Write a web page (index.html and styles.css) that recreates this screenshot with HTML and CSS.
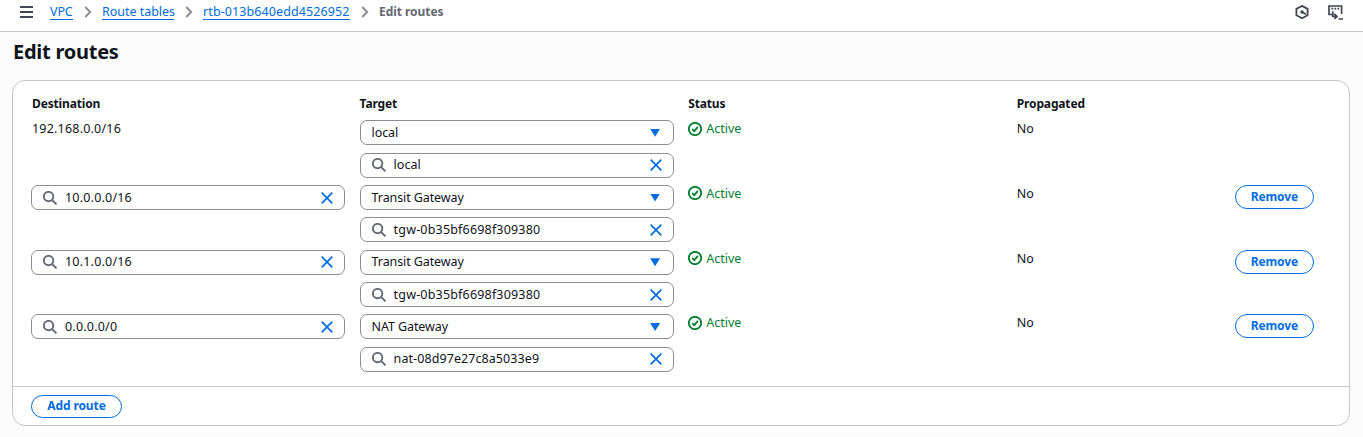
FILE: index.html
```html
<!DOCTYPE html>
<html lang="en">
<head>
<meta charset="utf-8">
<title>Edit routes</title>
<link rel="stylesheet" href="styles.css">
</head>
<body>
<svg class="defs" width="0" height="0">
  <symbol id="search" viewBox="0 0 14 14"><circle cx="5.6" cy="5.6" r="4.7"/><path d="M8.9 8.9l4.5 4.4"/></symbol>
  <symbol id="close" viewBox="0 0 12 12"><path d="M.7.7l10.6 10.6M11.3.7L.7 11.3"/></symbol>
  <symbol id="check" viewBox="0 0 14 14"><circle cx="7" cy="7" r="6.2"/><path d="M4.2 7.1l2.1 2 3.6-4.2"/></symbol>
  <symbol id="chevron" viewBox="0 0 8 12"><path d="M1.2 1l5 5-5 5"/></symbol>
</svg>
<header class="topbar">
  <svg class="menu" viewBox="0 0 13 12"><path d="M0 1h13M0 6h13M0 11h13"/></svg>
  <nav class="crumbs">
    <a class="crumb vpc">VPC</a><svg class="sep"><use href="#chevron"/></svg>
    <a class="crumb tables">Route tables</a><svg class="sep"><use href="#chevron"/></svg>
    <a class="crumb rtb">rtb-013b640edd4526952</a><svg class="sep"><use href="#chevron"/></svg>
    <span class="current">Edit routes</span>
  </nav>
  <div class="tools">
    <svg class="hex" viewBox="0 0 14 14"><path d="M7 .9l5.6 3v6.4L7 13.3l-5.6-3V3.9z"/><path d="M7 7l4 2.2"/><circle class="dot" cx="7" cy="7" r="1.7"/></svg>
    <svg class="shell" viewBox="0 0 15 15"><path d="M4 9.5H1V1h12.6v8"/><path d="M3.4 3.6h1.8M6.4 3.6h1.8M9.4 3.6h1.8"/><path d="M4.8 6.2v5.2H8.6M6.4 8.8L9 11.4 6.4 14M10.5 14H15"/></svg>
  </div>
</header>
<main class="page">
  <h1 class="title">Edit routes</h1>
  <section class="card">
    <div class="routes">
      <div class="row head"><span>Destination</span><span>Target</span><span>Status</span><span>Propagated</span></div>
      <div class="row">
        <div class="value ip">192.168.0.0/16</div>
        <div class="stack">
          <div class="field select"><span>local</span><i class="caret"></i></div>
          <div class="field"><svg class="search"><use href="#search"/></svg><span>local</span><svg class="close"><use href="#close"/></svg></div>
        </div>
        <div class="status"><svg class="check"><use href="#check"/></svg>Active</div>
        <div class="value">No</div>
      </div>
      <div class="row">
        <div class="field"><svg class="search"><use href="#search"/></svg><span class="ip">10.0.0.0/16</span><svg class="close"><use href="#close"/></svg></div>
        <div class="stack">
          <div class="field select"><span>Transit Gateway</span><i class="caret"></i></div>
          <div class="field"><svg class="search"><use href="#search"/></svg><span class="id">tgw-0b35bf6698f309380</span><svg class="close"><use href="#close"/></svg></div>
        </div>
        <div class="status"><svg class="check"><use href="#check"/></svg>Active</div>
        <div class="value">No</div>
        <button class="button remove">Remove</button>
      </div>
      <div class="row">
        <div class="field"><svg class="search"><use href="#search"/></svg><span class="ip">10.1.0.0/16</span><svg class="close"><use href="#close"/></svg></div>
        <div class="stack">
          <div class="field select"><span>Transit Gateway</span><i class="caret"></i></div>
          <div class="field"><svg class="search"><use href="#search"/></svg><span class="id">tgw-0b35bf6698f309380</span><svg class="close"><use href="#close"/></svg></div>
        </div>
        <div class="status"><svg class="check"><use href="#check"/></svg>Active</div>
        <div class="value">No</div>
        <button class="button remove">Remove</button>
      </div>
      <div class="row">
        <div class="field"><svg class="search"><use href="#search"/></svg><span class="ip">0.0.0.0/0</span><svg class="close"><use href="#close"/></svg></div>
        <div class="stack">
          <div class="field select"><span>NAT Gateway</span><i class="caret"></i></div>
          <div class="field"><svg class="search"><use href="#search"/></svg><span class="nat">nat-08d97e27c8a5033e9</span><svg class="close"><use href="#close"/></svg></div>
        </div>
        <div class="status"><svg class="check"><use href="#check"/></svg>Active</div>
        <div class="value">No</div>
        <button class="button remove">Remove</button>
      </div>
    </div>
    <footer class="footer"><button class="button add">Add route</button></footer>
  </section>
</main>
</body>
</html>
```
FILE: styles.css
```css
* { box-sizing: border-box; }
body { margin: 0; height: 437px; overflow: hidden; background: #fcfcfd; color: #0f141a; font: 12.5px/16px "Noto Sans", "Open Sans", sans-serif; }
svg { flex: none; fill: none; overflow: visible; }
.defs { position: absolute; }
.topbar { height: 32px; padding: 0 20px 7px 20px; display: flex; align-items: center; background: #fff; border-bottom: 1px solid #c6c6cd; }
.menu { width: 13px; height: 12px; stroke: #424650; stroke-width: 1.8; }
.crumbs { margin-left: 17px; display: flex; align-items: center; }
.crumb { height: 16px; color: #006ce0; border-bottom: 1px solid #006ce0; line-height: 16px; white-space: nowrap; }
.vpc { width: 23px; letter-spacing: -.1px; }
.tables { width: 72px; letter-spacing: -.03px; }
.rtb { width: 147px; letter-spacing: .1px; }
.sep { width: 8px; height: 12px; margin: 0 10px 0 11px; stroke: #8c8c94; stroke-width: 1.9; }
.current { height: 17px; font-weight: 700; color: #656871; font-size: 12px; line-height: 15px; letter-spacing: -.05px; }
.tools { margin-left: auto; display: flex; gap: 19px; }
.hex { width: 14px; height: 14px; stroke: #424650; stroke-width: 1.8; }
.dot { fill: #424650; stroke: none; }
.shell { width: 15px; height: 15px; stroke: #424650; stroke-width: 1.7; }
.page { padding: 0 13px 0 12px; }
.title { margin: 0; padding: 6px 0 0 1px; height: 48px; font-size: 20px; line-height: 28px; font-weight: 700; letter-spacing: -.25px; }
.card { height: 346px; border: 1px solid #c6c6cd; border-radius: 13px; background: #fff; display: flex; flex-direction: column; }
.routes { height: 305px; padding: 14.25px 18px 0; }
.row { height: 64.7px; display: grid; grid-template-columns: 314px 314px 314px 203.5px 80px; column-gap: 14.6px; align-items: start; }
.head { height: 25px; font-size: 12px; font-weight: 700; line-height: 17px; letter-spacing: -.15px; }
.row > :first-child:not(.field) { padding-left: 1px; }
.stack { display: grid; row-gap: 7.2px; }
.field { height: 25.15px; border: 1px solid #8c8c94; border-radius: 7px; padding: 0 11.5px 0 11px; display: flex; align-items: center; }
.stack .field { padding-right: 11px; }
.field span { flex: 1; line-height: 16px; }
.stack .select { padding: 0 12.5px 0 11px; }
.select span { letter-spacing: -.1px; }
.ip { letter-spacing: .2px; }
.field .id { letter-spacing: .18px; }
.field .nat { letter-spacing: .08px; }
.caret { width: 10px; height: 8px; background: #006ce0; clip-path: polygon(0 0, 100% 0, 50% 100%); }
.search { width: 14px; height: 14px; margin-right: 8px; stroke: #656871; stroke-width: 1.9; }
.close { width: 12px; height: 12px; stroke: #006ce0; stroke-width: 1.7; }
.value { line-height: 17px; }
.status { display: flex; align-items: center; gap: 4px; color: #00802f; line-height: 17px; }
.check { width: 14px; height: 14px; stroke: #00802f; stroke-width: 1.8; }
.button { padding: 0; border: 1px solid #006ce0; border-radius: 13px; background: #fff; color: #006ce0; font: 700 12px/16px "Noto Sans", "Open Sans", sans-serif; letter-spacing: -.1px; }
.remove { width: 79px; height: 24px; }
.footer { height: 39px; padding: 8px 18px; border-top: 1px solid #c6c6cd; }
.add { display: block; width: 91px; height: 23px; padding-bottom: 2px; }
```
